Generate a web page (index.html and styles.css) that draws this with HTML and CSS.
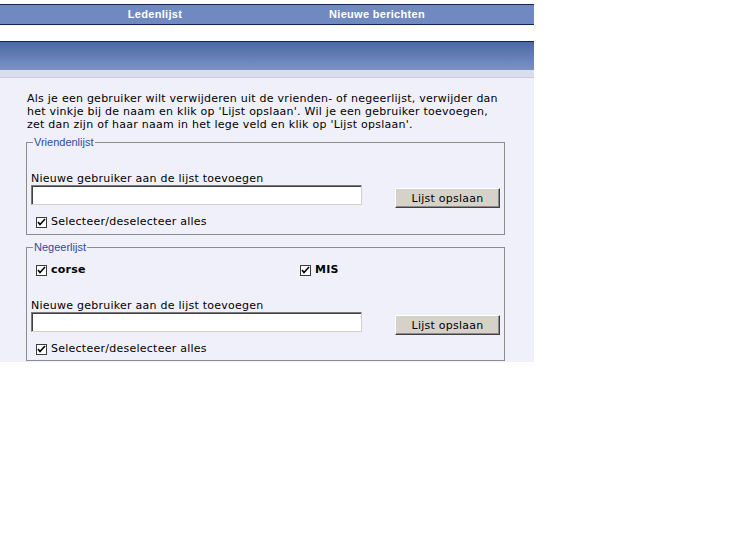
FILE: index.html
```html
<!DOCTYPE html>
<html lang="nl">
<head>
  <meta charset="UTF-8" />
  <title>Vrienden- en negeerlijst</title>
  <link rel="stylesheet" href="styles.css">
</head>
<body>
  <div class="page">
    <nav class="top-nav">
      <a href="#">Ledenlijst</a>
      <a href="#">Nieuwe berichten</a>
    </nav>

    <div class="title-bar"></div>

    <div class="content">
      <p class="intro">Als je een gebruiker wilt verwijderen uit de vrienden- of negeerlijst, verwijder dan<br>het vinkje bij de naam en klik op 'Lijst opslaan'. Wil je een gebruiker toevoegen,<br>zet dan zijn of haar naam in het lege veld en klik op 'Lijst opslaan'.</p>

      <fieldset class="list-box friends">
        <legend>Vriendenlijst</legend>
        <div class="field-label">Nieuwe gebruiker aan de lijst toevoegen</div>
        <div class="add-row">
          <input type="text" class="user-input" />
          <button class="save-btn">Lijst opslaan</button>
        </div>
        <label class="check-row">
          <span class="box"><svg width="9" height="9" viewBox="0 0 9 9"><path d="M1 4 L3 6.5 L8 1" fill="none" stroke="#000" stroke-width="1.6"/></svg></span>
          Selecteer/deselecteer alles
        </label>
      </fieldset>

      <fieldset class="list-box ignore">
        <legend>Negeerlijst</legend>
        <div class="users">
          <label class="check-row user">
            <span class="box"><svg width="9" height="9" viewBox="0 0 9 9"><path d="M1 4 L3 6.5 L8 1" fill="none" stroke="#000" stroke-width="1.6"/></svg></span>
            corse
          </label>
          <label class="check-row user">
            <span class="box"><svg width="9" height="9" viewBox="0 0 9 9"><path d="M1 4 L3 6.5 L8 1" fill="none" stroke="#000" stroke-width="1.6"/></svg></span>
            MIS
          </label>
        </div>
        <div class="field-label">Nieuwe gebruiker aan de lijst toevoegen</div>
        <div class="add-row">
          <input type="text" class="user-input" />
          <button class="save-btn">Lijst opslaan</button>
        </div>
        <label class="check-row">
          <span class="box"><svg width="9" height="9" viewBox="0 0 9 9"><path d="M1 4 L3 6.5 L8 1" fill="none" stroke="#000" stroke-width="1.6"/></svg></span>
          Selecteer/deselecteer alles
        </label>
      </fieldset>
    </div>
  </div>
</body>
</html>
```

FILE: styles.css
```css
html, body {
  margin: 0;
  padding: 0;
  background: #ffffff;
  font-family: "DejaVu Sans", Verdana, sans-serif;
  font-size: 11px;
  letter-spacing: 0.25px;
  color: #000000;
}

.page {
  width: 534px;
  padding-top: 4px;
}

.top-nav {
  display: flex;
  height: 19px;
  padding-left: 44px;
  background: #7189c1;
  border-top: 1px solid #14245a;
  border-bottom: 1px solid #14245a;
}

.top-nav a {
  width: 222px;
  text-align: center;
  color: #ffffff;
  font-family: "Liberation Sans", Arial, sans-serif;
  font-weight: bold;
  font-size: 11px;
  letter-spacing: 0.3px;
  line-height: 19px;
  text-decoration: none;
}

.title-bar {
  margin-top: 16px;
  height: 28px;
  border-top: 1px solid #14245a;
  background: linear-gradient(#4b69a4, #7c92c5);
  border-bottom: 7px solid #d9dded;
  box-shadow: 0 1px 0 #c9ccd8;
}

.content {
  background: #f0f0fa;
  margin-top: 1px;
  padding: 14px 29px 1px 26px;
}

.intro {
  margin: 0 0 5px 1px;
  line-height: 13px;
}

.list-box {
  margin: 0;
  min-width: 0;
  width: 479px;
  box-sizing: border-box;
  border: 1px solid #8c8c8c;
  padding: 0 4px 5px 4px;
}

.list-box + .list-box {
  margin-top: 6px;
  padding-bottom: 4px;
}

.list-box legend {
  padding: 0 1px;
  margin-left: 2px;
  color: #2e4a9e;
  font-family: "Liberation Sans", Arial, sans-serif;
  font-size: 11px;
  letter-spacing: 0;
  line-height: 13px;
}

.field-label {
  margin-top: 23px;
  line-height: 13px;
}

.ignore .field-label {
  margin-top: 22px;
}

.add-row {
  display: flex;
  align-items: flex-start;
}

.user-input {
  width: 331px;
  height: 20px;
  box-sizing: border-box;
  margin: 0;
  padding: 0 3px;
  background: #ffffff;
  border: 1px solid;
  border-color: #7a7a7a #d4d0c8 #d4d0c8 #7a7a7a;
  box-shadow: inset 1px 1px 0 #404040;
  font: inherit;
}

.save-btn {
  margin: 3px 0 0 33px;
  width: 105px;
  height: 20px;
  box-sizing: border-box;
  padding: 0;
  background: #d6d2ca;
  border: 1px solid;
  border-color: #ffffff #404040 #404040 #ffffff;
  box-shadow: inset -1px -1px 0 #8a8a8a;
  font-family: "DejaVu Sans", Verdana, sans-serif;
  font-size: 11px;
  letter-spacing: 0.25px;
  color: #000000;
}

.check-row {
  display: flex;
  align-items: center;
  gap: 4px;
  margin-top: 7px;
  padding-left: 5px;
  line-height: 14px;
}

.box {
  display: inline-flex;
  align-items: center;
  justify-content: center;
  width: 11px;
  height: 11px;
  box-sizing: border-box;
  background: #ffffff;
  border: 1px solid #3c3c3c;
}

.users {
  display: grid;
  grid-template-columns: 264px 1fr;
  margin-top: 9px;
}

.users .check-row {
  margin-top: 0;
  font-weight: bold;
}
```
